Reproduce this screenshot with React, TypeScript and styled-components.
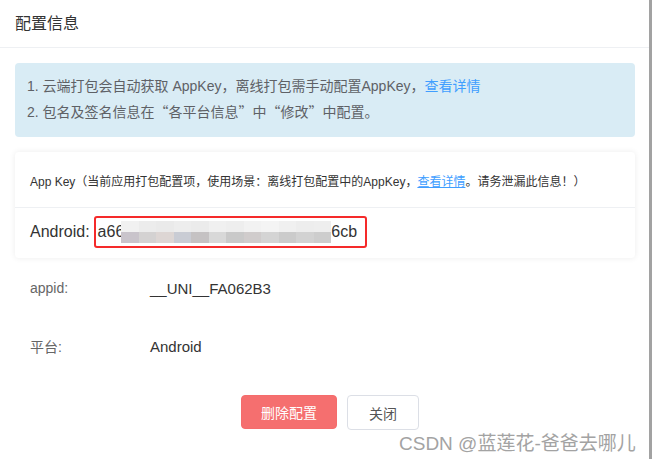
import React from 'react'
import styled, { createGlobalStyle } from 'styled-components'

const GlobalStyle = createGlobalStyle`
   html, body {
      margin: 0;
      padding: 0;
      background: #fff;
   }
   body {
      font-family: "Liberation Sans", "Noto Sans CJK SC", sans-serif;
      color: #333;
   }
`

export const Page = styled.div`
   position: relative;
   display: flex;
   width: 652px;
   height: 459px;
   overflow: hidden;
`
export const Dialog = styled.div`
   flex: 1;
   display: flex;
   flex-flow: column;
   background: #fff;
`
export const ScrollEdge = styled.div`
   width: 3px;
   background: #a2a2a2;
`
export const Header = styled.div`
   height: 48px;
   padding: 0 15px;
   display: flex;
   align-items: center;
   font-size: 16px;
   color: #333;
   border-bottom: 1px solid #eef0f3;
   box-sizing: border-box;
   padding-bottom: 4px;
`
export const Body = styled.div`
   padding: 15px 14px 0 15px;
`
export const Tip = styled.div`
   background: #d9ecf5;
   border-radius: 4px;
   padding: 11px 12px 12px;
   font-size: 14px;
   line-height: 25px;
   color: #5e6166;
`
export const Quote = styled.span`
   font-family: "Noto Sans CJK SC", sans-serif;
`
export const TipLink = styled.a`
   color: #409eff;
   text-decoration: ${p => (p.$underline ? 'underline' : 'none')};
   cursor: pointer;
`
export const KeyCard = styled.div`
   margin-top: 15px;
   border-radius: 4px;
   background: #fff;
   box-shadow: 0 0 6px rgba(0, 0, 0, 0.08);
`
export const KeyNote = styled.div`
   padding: 19px 15px 14px;
   font-size: 12px;
   line-height: 22px;
   color: #333;
   border-bottom: 1px solid #eef0f3;
`
export const KeyRow = styled.div`
   display: flex;
   align-items: center;
   padding: 8px 15px 10px;
   font-size: 16px;
   color: #333;
`
export const KeyLabel = styled.span`
   margin-right: 4px;
`
export const KeyBox = styled.div`
   display: flex;
   align-items: center;
   width: 273px;
   height: 32px;
   box-sizing: border-box;
   border: 2px solid #f52a2a;
   border-radius: 3px;
   padding-left: 2px;
`
export const Mosaic = styled.div`
   display: flex;
   width: 210px;
   height: 22px;
   margin-left: -3px;
`
export const MosaicCell = styled.div`
   flex: 1;
   display: flex;
   flex-flow: column;
   & > div {
      flex: 1;
   }
`
export const InfoList = styled.div`
   margin-top: 1px;
`
export const InfoRow = styled.div`
   display: flex;
   height: 58px;
   align-items: center;
   padding-left: 15px;
`
export const InfoLabel = styled.span`
   width: 120px;
   font-size: 14px;
   color: #666;
`
export const InfoValue = styled.span`
   font-size: 15px;
   color: #333;
`
export const Footer = styled.div`
   display: flex;
   justify-content: center;
   gap: 10px;
   margin-top: 20px;
   padding-left: 11px;
`
export const Button = styled.button`
   height: ${p => (p.$danger ? '34px' : '35px')};
   padding: 0 ${p => (p.$danger ? '19px' : '21px')};
   border-radius: 4px;
   font-family: inherit;
   font-size: 14px;
   cursor: pointer;
   border: 1px solid ${p => (p.$danger ? '#f56c6c' : '#dcdfe6')};
   background: ${p => (p.$danger ? '#f56f6f' : '#fff')};
   color: ${p => (p.$danger ? '#fff' : '#555')};
`
export const Watermark = styled.div`
   position: absolute;
   left: 399px;
   top: 428px;
   font-size: 19px;
   color: #a3a3a3;
   text-shadow: 0 0 2px #fff;
   white-space: nowrap;
   pointer-events: none;
`

const mosaicTop = ['#f1f1f1', '#ececec', '#eaeaea', '#ededed', '#ebebeb', '#f0f0f0', '#eeeeee', '#f2f2f2', '#f4f4f4', '#f0f0f0', '#ededed', '#eeeeee']
const mosaicBottom = ['#c9c4cb', '#d4d2d2', '#ddd6d4', '#c9ccd4', '#c5c2c3', '#d8d8d8', '#c9c9c9', '#d0cccc', '#d4d4d4', '#cbcbcb', '#d2d2d2', '#cdcdcd']

const App: React.FC = () => {
   return (
      <Page>
         <GlobalStyle />
         <Dialog>
            <Header>配置信息</Header>
            <Body>
               <Tip>
                  <div>1. 云端打包会自动获取 AppKey，离线打包需手动配置AppKey，<TipLink>查看详情</TipLink></div>
                  <div>2. 包名及签名信息在<Quote>“</Quote>各平台信息<Quote>”</Quote>中<Quote>“</Quote>修改<Quote>”</Quote>中配置。</div>
               </Tip>

               <KeyCard>
                  <KeyNote>
                     App Key（当前应用打包配置项，使用场景：离线打包配置中的AppKey，<TipLink $underline>查看详情</TipLink>。请务泄漏此信息！）
                  </KeyNote>
                  <KeyRow>
                     <KeyLabel>Android:</KeyLabel>
                     <KeyBox>
                        a66
                        <Mosaic>
                           {mosaicBottom.map((c, i) => (
                              <MosaicCell key={i}>
                                 <div style={{ background: mosaicTop[i] }} />
                                 <div style={{ background: c }} />
                              </MosaicCell>
                           ))}
                        </Mosaic>
                        6cb
                     </KeyBox>
                  </KeyRow>
               </KeyCard>

               <InfoList>
                  <InfoRow>
                     <InfoLabel>appid:</InfoLabel>
                     <InfoValue>__UNI__FA062B3</InfoValue>
                  </InfoRow>
                  <InfoRow>
                     <InfoLabel>平台:</InfoLabel>
                     <InfoValue>Android</InfoValue>
                  </InfoRow>
               </InfoList>
            </Body>

            <Footer>
               <Button $danger>删除配置</Button>
               <Button>关闭</Button>
            </Footer>
         </Dialog>
         <ScrollEdge />
         <Watermark>CSDN @蓝莲花-爸爸去哪儿</Watermark>
      </Page>
   )
}
export default App
